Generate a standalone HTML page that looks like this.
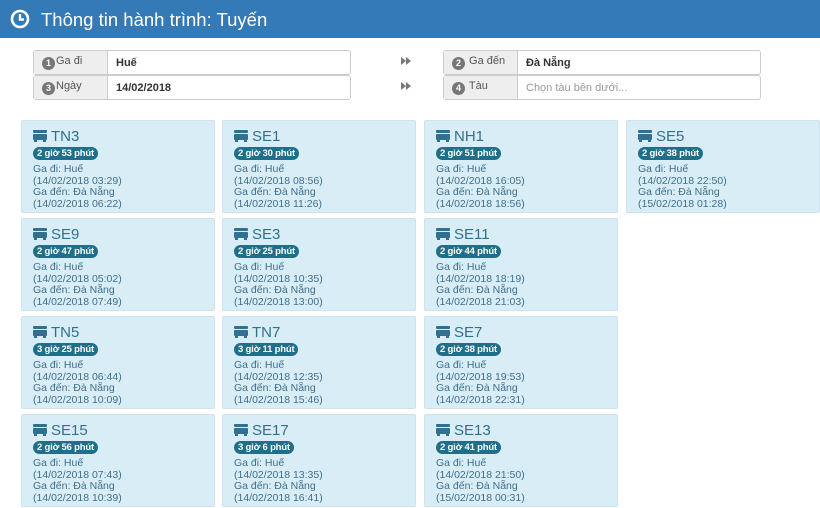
<!DOCTYPE html>
<html><head><meta charset="utf-8"><style>
*{box-sizing:border-box;margin:0;padding:0}
body{width:820px;height:508px;overflow:hidden;background:#fff;font-family:"Liberation Sans",sans-serif;position:relative}
.hdr{position:absolute;left:0;top:0;width:820px;height:38px;background:#337ab7;color:#fff;font-size:18.5px}
.hdr .t{position:absolute;left:41px;top:9px}
.hdr svg{position:absolute;left:10px;top:9px}
.grp{position:absolute;height:25px;border:1px solid #ccc;border-radius:3px;background:#fff;font-size:11px}
.grp .ad{position:absolute;left:0;top:0;bottom:0;width:74px;background:#eee;border-right:1px solid #ccc;color:#555;padding:4px 0 0 8px}
.num{display:inline-block;width:13px;height:13px;border-radius:50%;background:#777;color:#fff;font-size:9px;font-weight:bold;text-align:center;line-height:13px;vertical-align:-2px;margin-right:1px}
.grp .v{position:absolute;left:82px;top:6px;font-weight:bold;color:#333}
.arr{position:absolute}
.card{position:absolute;width:194px;height:93px;background:#d9edf7;border:1px solid #cfe3ee;border-radius:2px;color:#3f6f8c;font-size:10.5px}
.card .ti{position:absolute;left:11px;top:7px;font-size:15px;color:#31708f;white-space:nowrap}
.card .ti svg{vertical-align:-1px;margin-right:4px}
.bd{position:absolute;left:11px;top:26px;height:13px;padding:0 4px;background:#1f6f8b;color:#fff;border-radius:7px;font-size:9.5px;font-weight:bold;line-height:13px;letter-spacing:-0.2px}
.tx{position:absolute;left:11px;top:43px;line-height:11.6px}
</style></head><body>
<div class="hdr"><svg width="20" height="20" viewBox="0 0 20 20"><circle cx="10" cy="10" r="8" fill="none" stroke="#fff" stroke-width="2.6"/><path d="M10 5v5.5h4" fill="none" stroke="#fff" stroke-width="2.4"/></svg><span class="t">Thông tin hành trình: Tuyến</span></div>
<div class="grp" style="left:33px;top:50px;width:318px"><div class="ad"><span class="num">1</span>Ga đi</div><span class="v">Huế</span></div>
<div class="grp" style="left:33px;top:75px;width:318px"><div class="ad"><span class="num">3</span>Ngày</div><span class="v">14/02/2018</span></div>
<div class="grp" style="left:443px;top:50px;width:318px"><div class="ad"><span class="num">2</span> Ga đến</div><span class="v">Đà Nẵng</span></div>
<div class="grp" style="left:443px;top:75px;width:318px"><div class="ad"><span class="num">4</span> Tàu</div><span class="v" style="font-weight:normal;color:#999">Chọn tàu bên dưới...</span></div>
<svg class="arr" style="left:401px;top:57px" width="10" height="8" viewBox="0 0 10 8"><path d="M0 0L5 4L0 8ZM5 0L10 4L5 8Z" fill="#777"/></svg>
<svg class="arr" style="left:401px;top:82px" width="10" height="8" viewBox="0 0 10 8"><path d="M0 0L5 4L0 8ZM5 0L10 4L5 8Z" fill="#777"/></svg>
<svg width="0" height="0" style="position:absolute"><defs><symbol id="bus" viewBox="0 0 14 12"><rect x="0" y="0" width="14" height="3" rx="1" fill="#31708f"/><rect x="0" y="4" width="14" height="6" rx="1" fill="#31708f"/><rect x="1" y="9" width="3" height="3" fill="#31708f"/><rect x="10" y="9" width="3" height="3" fill="#31708f"/></symbol></defs></svg>
<div id="cards"></div>
<script>
var d=[["TN3","2 giờ 53 phút","14/02/2018 03:29","14/02/2018 06:22"],["SE1","2 giờ 30 phút","14/02/2018 08:56","14/02/2018 11:26"],["NH1","2 giờ 51 phút","14/02/2018 16:05","14/02/2018 18:56"],["SE5","2 giờ 38 phút","14/02/2018 22:50","15/02/2018 01:28"],
["SE9","2 giờ 47 phút","14/02/2018 05:02","14/02/2018 07:49"],["SE3","2 giờ 25 phút","14/02/2018 10:35","14/02/2018 13:00"],["SE11","2 giờ 44 phút","14/02/2018 18:19","14/02/2018 21:03"],null,
["TN5","3 giờ 25 phút","14/02/2018 06:44","14/02/2018 10:09"],["TN7","3 giờ 11 phút","14/02/2018 12:35","14/02/2018 15:46"],["SE7","2 giờ 38 phút","14/02/2018 19:53","14/02/2018 22:31"],null,
["SE15","2 giờ 56 phút","14/02/2018 07:43","14/02/2018 10:39"],["SE17","3 giờ 6 phút","14/02/2018 13:35","14/02/2018 16:41"],["SE13","2 giờ 41 phút","14/02/2018 21:50","15/02/2018 00:31"],null];
var xs=[21,222,424,626],ys=[120,218,316,414],h="";
d.forEach(function(c,i){if(!c)return;h+='<div class="card" style="left:'+xs[i%4]+'px;top:'+ys[Math.floor(i/4)]+'px"><div class="ti"><svg width="14" height="12"><use href="#bus"/></svg>'+c[0]+'</div><div class="bd">'+c[1]+'</div><div class="tx">Ga đi: Huế<br>('+c[2]+')<br>Ga đến: Đà Nẵng<br>('+c[3]+')</div></div>';});
document.getElementById("cards").innerHTML=h;
</script>
</body></html>
